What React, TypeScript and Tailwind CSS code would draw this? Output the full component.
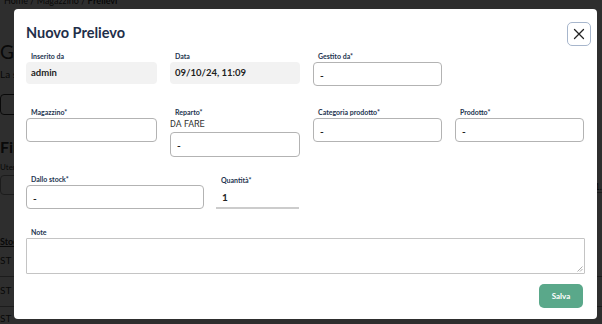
import React from "react";

const font = { fontFamily: "Lato, 'Noto Sans', sans-serif" };

function Label({ children, className = "mb-[2px]" }: { children: React.ReactNode; className?: string }) {
  return (
    <div className={"text-[7px] font-bold text-[#24344f] leading-none pl-[5px] " + className}>{children}</div>
  );
}

function BoxInput({ value = "", className = "" }: { value?: string; className?: string }) {
  return (
    <div
      className={
        "h-[24px] rounded-[4px] border border-[#b3b3b3] bg-white flex items-center px-[6px] pt-[2px] text-[10px] font-bold text-[#222] " +
        className
      }
    >
      {value}
    </div>
  );
}

function ReadOnly({ value }: { value: string }) {
  return (
    <div className="h-[22px] rounded-[4px] bg-[#f2f2f2] flex items-center px-[5px] text-[9.5px] font-bold text-[#1f1f1f]">
      {value}
    </div>
  );
}

export default function App() {
  return (
    <div className="relative w-[602px] h-[324px] overflow-hidden bg-white" style={font}>
      {/* background page */}
      <div className="absolute inset-0 text-[#333]">
        <div className="text-[9px] pl-[4px] -mt-[6px]">Home / Magazzino / <b>Prelievi</b></div>
        <div className="text-[19px] mt-[30px]">Gestione prelievi</div>
        <div className="text-[10px] mt-[1px]">La sezione prelievi</div>
        <div className="mt-[12px] w-[60px] h-[21px] border border-[#333] rounded-[4px]" />
        <div className="text-[16px] font-bold mt-[20px]">Filtri</div>
        <div className="text-[8px] mt-[2px]">Utente</div>
        <div className="mt-[2px] w-[60px] h-[20px] border border-[#999] rounded-[4px]" />
        <div className="text-[9px] font-bold underline mt-[40px]">Stock</div>
        <div className="text-[10px] mt-[4px] pb-[8px] border-b border-[#999]">ST</div>
        <div className="text-[10px] mt-[6px] pb-[8px] border-b border-[#999]">ST</div>
        <div className="text-[10px] mt-[4px]">ST</div>
        <div className="absolute right-0 top-[180px] text-[9px]">1.</div>
        <div className="absolute right-0 top-[192px] w-[10px] border-b border-[#999]" />
      </div>
      <div className="absolute inset-0 bg-black/[0.82]" />

      {/* modal */}
      <div className="absolute left-[14px] top-[9px] w-[583px] h-[310px] bg-white rounded-[4px] px-[12px]">
        <div className="flex items-start justify-between">
          <div className="text-[14.5px] font-bold text-[#1f2f4a] mt-[13px]">Nuovo Prelievo</div>
          <button className="mt-[13px] -mr-[6px] w-[24px] h-[24px] rounded-[5px] border border-[#a7b6cc] flex items-center justify-center">
            <svg width="12" height="12" viewBox="0 0 12 12" fill="none" stroke="#222" strokeWidth="1.3" strokeLinecap="round">
              <path d="M1.5 1.5 L10.5 10.5 M10.5 1.5 L1.5 10.5" />
            </svg>
          </button>
        </div>

        {/* row 1 */}
        <div className="grid grid-cols-[131px_130px_129px_129px] gap-x-[13px] mt-[7px]">
          <div>
            <Label>Inserito da</Label>
            <ReadOnly value="admin" />
          </div>
          <div>
            <Label>Data</Label>
            <ReadOnly value="09/10/24, 11:09" />
          </div>
          <div>
            <Label>Gestito da*</Label>
            <BoxInput value="-" />
          </div>
          <div />
        </div>

        {/* row 2 */}
        <div className="grid grid-cols-[131px_130px_129px_129px] gap-x-[13px] mt-[23px]">
          <div>
            <Label>Magazzino*</Label>
            <BoxInput />
          </div>
          <div>
            <Label className="mb-[4px]">Reparto*</Label>
            <div className="text-[9px] text-[#333] leading-none mb-[3px]" style={{ fontFamily: "Roboto, sans-serif" }}>
              DA FARE
            </div>
            <BoxInput value="-" className="h-[25px]" />
          </div>
          <div>
            <Label>Categoria prodotto*</Label>
            <BoxInput value="-" />
          </div>
          <div>
            <Label>Prodotto*</Label>
            <BoxInput value="-" />
          </div>
        </div>

        {/* row 3 */}
        <div className="flex gap-x-[12px] mt-[19px]">
          <div className="w-[178px]">
            <Label>Dallo stock*</Label>
            <BoxInput value="-" />
          </div>
          <div className="w-[83px] pt-[1px]">
            <Label>Quantità*</Label>
            <div className="h-[23px] border-b-2 border-[#cccccc] flex items-center px-[6px] pt-[1px] text-[10px] font-bold text-[#222]">
              1
            </div>
          </div>
        </div>

        {/* row 4 */}
        <div className="mt-[20px]">
          <Label>Note</Label>
          <div className="relative h-[36px] border border-[#c4c4c4] rounded-[1px]">
            <svg className="absolute right-[1px] bottom-[1px]" width="6" height="6" viewBox="0 0 6 6" stroke="#999" strokeWidth="0.8">
              <path d="M5.5 0.5 L0.5 5.5 M5.5 3 L3 5.5" />
            </svg>
          </div>
        </div>

        <div className="flex justify-end mt-[10px]">
          <button className="w-[44px] h-[24px] rounded-[5px] bg-[#5aa88a] text-white text-[8px] font-bold mr-[2px]">
            Salva
          </button>
        </div>
      </div>
    </div>
  );
}
